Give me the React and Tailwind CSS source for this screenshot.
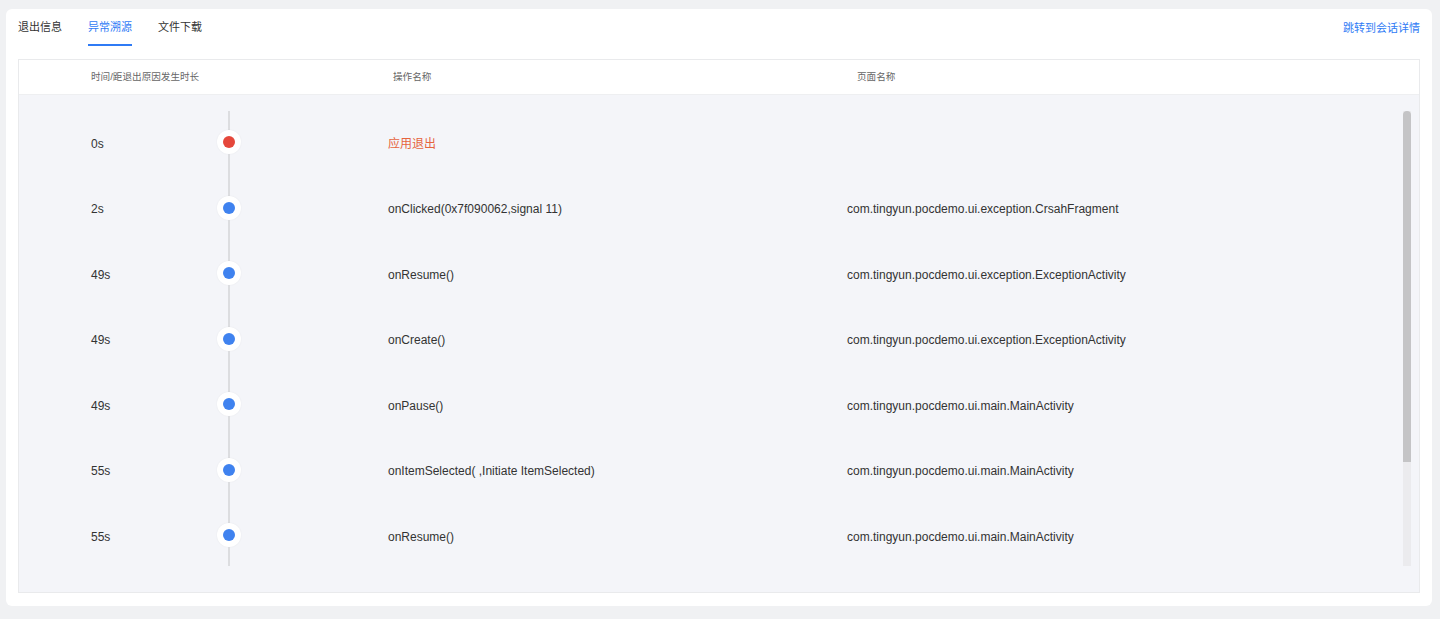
const rows = [
  { time: '0s', action: '应用退出', page: '', exit: true },
  { time: '2s', action: 'onClicked(0x7f090062,signal 11)', page: 'com.tingyun.pocdemo.ui.exception.CrsahFragment' },
  { time: '49s', action: 'onResume()', page: 'com.tingyun.pocdemo.ui.exception.ExceptionActivity' },
  { time: '49s', action: 'onCreate()', page: 'com.tingyun.pocdemo.ui.exception.ExceptionActivity' },
  { time: '49s', action: 'onPause()', page: 'com.tingyun.pocdemo.ui.main.MainActivity' },
  { time: '55s', action: 'onItemSelected( ,Initiate ItemSelected)', page: 'com.tingyun.pocdemo.ui.main.MainActivity' },
  { time: '55s', action: 'onResume()', page: 'com.tingyun.pocdemo.ui.main.MainActivity' },
];

const tabs = ['退出信息', '异常溯源', '文件下载'];

function TimelineRow({ row }) {
  return (
    <div className="flex h-[65.5px] shrink-0 items-center text-[12px] text-[#333]">
      <div className="w-[198px] shrink-0 pl-[72px]">{row.time}</div>
      <div className="flex h-full w-6 shrink-0 flex-col items-center">
        <div className="h-[19px] w-[2px] bg-[#dcdde0]" />
        <div className="flex h-6 w-6 items-center justify-center rounded-full bg-white shadow-[0_0_2px_rgba(0,0,0,0.06)]">
          <div className={`h-3 w-3 rounded-full ${row.exit ? 'bg-[#e5473b]' : 'bg-[#3f82ef]'}`} />
        </div>
        <div className="w-[2px] flex-1 bg-[#dcdde0]" />
      </div>
      <div className={`ml-[147px] w-[459px] shrink-0 ${row.exit ? 'text-[#e6643e]' : ''}`}>{row.action}</div>
      <div>{row.page}</div>
    </div>
  );
}

export default function App() {
  return (
    <div
      className="min-h-[619px] bg-[#f0f1f3] pt-[9px] pb-[13px] pl-[6px] pr-[8px]"
      style={{ fontFamily: '"Liberation Sans", "Noto Sans CJK SC", sans-serif' }}
    >
      <div className="rounded-md bg-white px-3 pb-[13px]">
        <div className="flex items-start justify-between">
          <div className="flex gap-[26px]">
            {tabs.map((t, i) => (
              <div
                key={t}
                className={`flex h-[37px] items-center border-b-2 pt-[1px] text-[11px] ${
                  i === 1 ? 'border-[#2f7bf5] text-[#2f7bf5]' : 'border-transparent text-[#333]'
                }`}
              >
                {t}
              </div>
            ))}
          </div>
          <div className="flex h-[37px] items-center pt-[1px] text-[11px] text-[#2f7bf5]">跳转到会话详情</div>
        </div>

        <div className="mt-[13px] border border-[#e9eaec]">
          <div className="flex h-[35px] items-center border-b border-[#eeeff1] bg-white text-[9.6px] text-[#666]">
            <div className="w-[374px] shrink-0 pl-[72px]">时间/距退出原因发生时长</div>
            <div className="w-[464px] shrink-0">操作名称</div>
            <div>页面名称</div>
          </div>
          <div className="flex bg-[#f4f5f9] pt-4 pb-[26px] pr-2">
            <div className="flex h-[455px] flex-1 flex-col overflow-hidden">
              {rows.map((r, i) => (
                <TimelineRow key={i} row={r} />
              ))}
            </div>
            <div className="flex h-[455px] w-2 flex-col bg-[#ebebee]">
              <div className="h-[351px] rounded-t bg-[#c4c4c6]" />
            </div>
          </div>
        </div>
      </div>
    </div>
  );
}
